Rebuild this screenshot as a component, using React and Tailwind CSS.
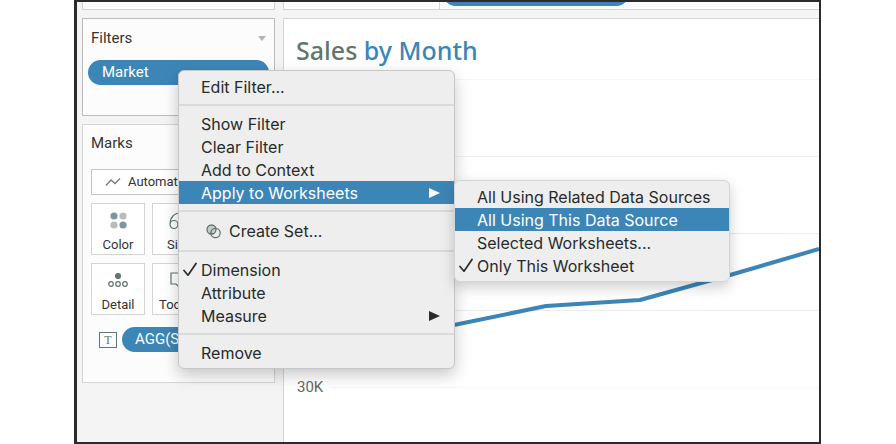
import React from "react";

const sans = "font-['Roboto','Liberation_Sans',sans-serif]";

function Caret({ className }) {
  return (
    <svg className={className} width="8" height="5" viewBox="0 0 8 5" aria-hidden="true">
      <path d="M0 0h8L4 5z" fill="currentColor" />
    </svg>
  );
}

function Check() {
  return (
    <svg width="14" height="15" viewBox="0 0 14 15" fill="none" stroke="#262b2b" strokeWidth="1.7" aria-hidden="true">
      <path d="M1 8.5 5 13.2 13 1.5" strokeLinecap="round" strokeLinejoin="round" />
    </svg>
  );
}

function Arrow() {
  return (
    <svg width="11" height="10" viewBox="0 0 11 10" aria-hidden="true">
      <path d="M0 0 11 5 0 10z" fill="currentColor" />
    </svg>
  );
}

function MenuItem({ children, checked, active, arrow }) {
  return (
    <button
      type="button"
      role="menuitem"
      className={`flex h-[23px] w-full items-center pr-[14px] text-left ${active ? "bg-[#3c86b7] text-white" : ""}`}
    >
      <span className="flex w-[22px] shrink-0 justify-center">{checked && <Check />}</span>
      <span className="grow">{children}</span>
      {arrow && <Arrow />}
    </button>
  );
}

function Separator() {
  return <hr className="my-[6px] border-t-2 border-[#d9dadb]" />;
}

function Tile({ label, children }) {
  return (
    <button type="button" className="flex h-[52px] w-[54px] flex-col items-center border border-[#d4d4d4] bg-white pt-2 text-[13px] leading-4 text-[#333]">
      <span className="flex h-[25px] items-start">{children}</span>
      <span>{label}</span>
    </button>
  );
}

function ContextMenu() {
  return (
    <div
      role="menu"
      className="absolute top-[68px] left-[101px] w-[277px] rounded-md border border-[#c6c7c8] bg-[#eeeeee] py-1 font-['Inter','Liberation_Sans',sans-serif] text-[16px] leading-[22px] text-[#262b2b] shadow-[0_6px_16px_rgba(0,0,0,0.22)]"
    >
      <MenuItem>Edit Filter...</MenuItem>
      <Separator />
      <MenuItem>Show Filter</MenuItem>
      <MenuItem>Clear Filter</MenuItem>
      <MenuItem>Add to Context</MenuItem>
      <div className="relative">
        <MenuItem active arrow>Apply to Worksheets</MenuItem>
        <div
          role="menu"
          className="absolute -top-px left-full w-[276px] rounded-md border border-[#d4d5d6] bg-[#eeeeee] py-1 shadow-[0_5px_14px_rgba(0,0,0,0.2)]"
        >
          <MenuItem>All Using Related Data Sources</MenuItem>
          <MenuItem active>All Using This Data Source</MenuItem>
          <MenuItem>Selected Worksheets...</MenuItem>
          <MenuItem checked>Only This Worksheet</MenuItem>
        </div>
      </div>
      <Separator />
      <button type="button" role="menuitem" className="flex h-[26px] w-full items-center gap-2 pl-[27px] text-left">
        <svg width="15" height="15" viewBox="0 0 15 15" fill="none" stroke="#5f776c" strokeWidth="1.3" aria-hidden="true">
          <circle cx="5.5" cy="5.5" r="4.5" fill="#c3cbcb" />
          <circle cx="9.5" cy="9" r="4.7" />
        </svg>
        <span>Create Set...</span>
      </button>
      <Separator />
      <MenuItem checked>Dimension</MenuItem>
      <MenuItem>Attribute</MenuItem>
      <MenuItem arrow>Measure</MenuItem>
      <Separator />
      <MenuItem>Remove</MenuItem>
    </div>
  );
}

function Sidebar() {
  return (
    <aside className="flex w-[198px] shrink-0 flex-col gap-2 pl-[5px]">
      <div className="h-2 border-x border-b border-[#d4d4d4] bg-[#fcfcfc]" />
      <section className="h-[98px] border border-[#bcbcbc] bg-[#fcfcfc] px-[5px] pt-[7px]">
        <header className="flex h-6 items-center justify-between px-[3px]">
          <h2 className="text-[15px] text-[#333]">Filters</h2>
          <Caret className="text-[#b5b5b5]" />
        </header>
        <button type="button" className="mt-[10px] flex h-[25px] w-full items-center justify-between rounded-full bg-[#3c86b7] pr-[17px] pl-[14px] text-[15px] text-white">
          Market
          <Caret />
        </button>
      </section>
      <section className="h-[259px] border border-[#d4d4d4] bg-[#fcfcfc] px-2 pt-[6px]">
        <h2 className="h-6 text-[15px] leading-6 text-[#333]">Marks</h2>
        <div className="relative mt-[14px] flex items-center">
          <select aria-label="Mark type" className="h-[26px] w-full appearance-none border border-[#c4c4c4] bg-white pl-9 text-[13px] text-[#333]">
            <option>Automatic</option>
          </select>
          <svg className="absolute left-[14px]" width="16" height="10" viewBox="0 0 16 10" fill="none" stroke="#6d7b80" strokeWidth="1.3" aria-hidden="true">
            <path d="M1 8.5 6 3l4 3.5L15 1.5" />
          </svg>
        </div>
        <div className="mt-2 grid grid-cols-[repeat(2,54px)] gap-x-[7px] gap-y-2">
          <Tile label="Color">
            <svg width="17" height="17" viewBox="0 0 17 17" aria-hidden="true">
              <circle cx="4" cy="4" r="3.6" fill="#8095a3" />
              <circle cx="13" cy="4" r="3.6" fill="#b9babd" />
              <circle cx="4" cy="13" r="3.6" fill="#b9babd" />
              <circle cx="13" cy="13" r="3.6" fill="#8095a3" />
            </svg>
          </Tile>
          <Tile label="Size">
            <svg width="20" height="18" viewBox="0 0 20 18" fill="none" stroke="#5f776c" strokeWidth="1.2" aria-hidden="true">
              <circle cx="5" cy="12.500" r="4" />
              <path d="M1.200 11.500C1.200 5.500 5 1 11.500 1a7 7 0 1 1-3 13" />
            </svg>
          </Tile>
          <Tile label="Detail">
            <svg width="20" height="17" viewBox="0 0 20 17" fill="none" stroke="#5f776c" strokeWidth="1.2" aria-hidden="true">
              <circle cx="10" cy="4" r="2.5" fill="#5f776c" />
              <circle cx="3" cy="12" r="2.3" />
              <circle cx="10" cy="12" r="2.3" />
              <circle cx="17" cy="12" r="2.3" />
            </svg>
          </Tile>
          <Tile label="Tooltip">
            <svg width="19" height="16" viewBox="0 0 19 16" fill="none" stroke="#5f776c" strokeWidth="1.2" aria-hidden="true">
              <path d="M1 1h17v11h-6l-3 3-3-3H1z" />
            </svg>
          </Tile>
        </div>
        <div className="mt-3 flex items-center gap-[5px] pl-2">
          <span className="flex h-4 w-[18px] items-center justify-center border border-[#5f776c] font-['Liberation_Serif',serif] text-[12px] leading-3 text-[#5f776c]">T</span>
          <button type="button" className="h-[25px] grow rounded-full bg-[#3c86b7] pl-[13px] text-left text-[15px] text-white">
            AGG(Sales)
          </button>
        </div>
      </section>
    </aside>
  );
}

function Sheet() {
  return (
    <main className="flex min-w-0 grow flex-col gap-2">
      <div className="flex h-2 border-b border-l border-[#d4d4d4] bg-[#fcfcfc]">
        <div className="w-[156px] border-r border-[#d4d4d4]" />
        <div className="flex grow items-end overflow-hidden pb-[3px] pl-[3px]">
          <div className="h-[25px] w-[186px] shrink-0 rounded-full bg-[#3c86b7]" />
        </div>
      </div>
      <section className="flex grow flex-col border-t border-l border-[#d4d4d4] bg-white">
        <h1 className="h-[60px] pt-[15px] pl-3 font-['Noto_Sans','Open_Sans',sans-serif] text-[25px] leading-8 font-medium text-[#5f776c]">
          Sales <span className="text-[#3c86b7]">by Month</span>
        </h1>
        <div className="relative">
          <div className="ml-[48px] h-[77px] border-t border-[#f8f8f8]" />
          <div className="ml-[48px] h-[77px] border-t border-[#f1f1f1]" />
          <div className="ml-[48px] h-[77px] border-t border-[#ececec]" />
          <div className="ml-[48px] h-[65px] border-t border-[#ececec]" />
          <div className="flex h-[24px] items-center gap-2 pl-[13px] text-[15px] text-[#666]">
            <span>30K</span>
            <div className="h-px grow bg-[#f6f6f6]" />
          </div>
          <svg className="absolute inset-0 h-full w-full" viewBox="0 0 535 320" preserveAspectRatio="none" fill="none" aria-hidden="true">
            <path d="M48 270 170 246 262 227 356 221 446 196 535 170" stroke="#3c86b7" strokeWidth="4" strokeLinejoin="round" vectorEffect="non-scaling-stroke" />
          </svg>
        </div>
      </section>
    </main>
  );
}

export default function App() {
  return (
    <div className={`flex min-h-screen bg-white pr-[75px] pl-[74px] ${sans}`}>
      <div className="relative flex min-w-0 grow gap-2 border-y-2 border-r-2 border-l-[3px] border-[#2b2b2b] bg-[#f4f4f4]">
        <Sidebar />
        <Sheet />
        <ContextMenu />
      </div>
    </div>
  );
}
